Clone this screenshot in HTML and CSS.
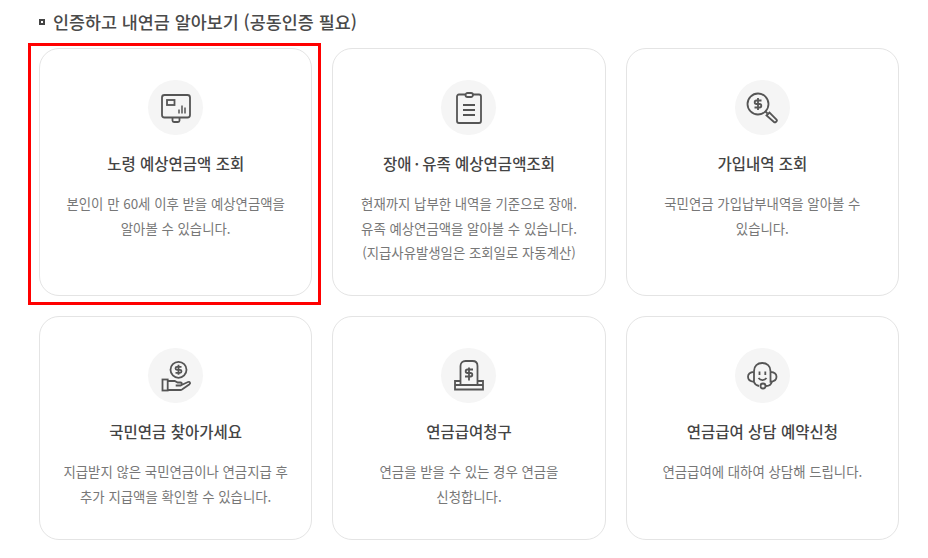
FILE: index.html
```html
<!DOCTYPE html>
<html lang="ko">
<head>
    <title>내연금 알아보기</title>
    <link rel="stylesheet" href="styles.css">
</head>
<body>
    <div class="pension-section">
        <h3 class="section-title"><span class="bullet"></span>인증하고 내연금 알아보기 (공동인증 필요)</h3>

        <div class="card-grid">
            <div class="card card-tall card-selected">
                <div class="icon-circle">
                    <svg viewBox="0 0 32 32" class="icon">
                        <rect x="2" y="3" width="28" height="22.500" rx="2.500"/>
                        <rect x="7" y="8" width="7.500" height="5"/>
                        <path d="M12.500 25.500v3c0 1 .5 1.500 1.500 1.500h4c1 0 1.500-.5 1.500-1.500v-3"/>
                        <path class="thin" d="M19 21.500v-4M22 21.500v-8M25 21.500v-6"/>
                    </svg>
                </div>
                <h4>노령 예상연금액 조회</h4>
                <p>본인이 만 60세 이후 받을 예상연금액을<br>알아볼 수 있습니다.</p>
            </div>

            <div class="card card-tall">
                <div class="icon-circle">
                    <svg viewBox="0 0 32 32" class="icon">
                        <path d="M12.500 2.500H6C4.800 2.500 4 3.300 4 4.500v24.500c0 1.200.8 2 2 2h20c1.200 0 2-.8 2-2V4.500c0-1.200-.8-2-2-2H20"/>
                        <rect x="12.500" y="1" width="7.500" height="4" rx="2"/>
                        <path d="M10 13h12M10 18h12M10 23h12"/>
                    </svg>
                </div>
                <h4>장애<span class="mid-dot">·</span>유족 예상연금액조회</h4>
                <p>현재까지 납부한 내역을 기준으로 장애.<br>유족 예상연금액을 알아볼 수 있습니다.<br>(지급사유발생일은 조회일로 자동계산)</p>
            </div>

            <div class="card card-tall">
                <div class="icon-circle">
                    <svg viewBox="0 0 32 32" class="icon">
                        <circle cx="12" cy="12" r="10.500"/>
                        <path d="M19.500 19.500l2 2"/>
                        <path d="M20.500 23.500l3-3 7 7c.6.7.6 1.200 0 1.800l-.7.700c-.6.600-1.200.600-1.800 0z"/>
                        <path d="M15.500 8.500h-5c-1.200 0-1.800.8-1.800 1.800s.6 1.700 1.800 1.700h3c1.200 0 1.800.8 1.800 1.800s-.6 1.700-1.800 1.700h-5M12 6v12"/>
                    </svg>
                </div>
                <h4>가입내역 조회</h4>
                <p>국민연금 가입납부내역을 알아볼 수<br>있습니다.</p>
            </div>

            <div class="card">
                <div class="icon-circle">
                    <svg viewBox="0 0 32 32" class="icon">
                        <circle cx="18.500" cy="9.800" r="8"/>
                        <path d="M21.500 6.800h-4.500c-1 0-1.500.7-1.500 1.500s.5 1.500 1.500 1.500h3c1 0 1.500.7 1.500 1.500s-.5 1.500-1.500 1.500h-4.500M18.500 4.800v10"/>
                        <rect x="2.500" y="19.500" width="5.200" height="11"/>
                        <path d="M7.700 21h7l3 1.500h3c1.500 0 1.500 3 0 3h-5M20.500 25.500l7.500-3.500c1.800-.7 2.800 1 1.500 2.200L22 29.500c-.5.300-1 .5-1.500.5H7.700"/>
                    </svg>
                </div>
                <h4>국민연금 찾아가세요</h4>
                <p>지급받지 않은 국민연금이나 연금지급 후<br>추가 지급액을 확인할 수 있습니다.</p>
            </div>

            <div class="card">
                <div class="icon-circle">
                    <svg viewBox="0 0 32 32" class="icon">
                        <path d="M7.500 25V6c0-3 2-5 5-5h7c3 0 5 2 5 5v19"/>
                        <path d="M7.500 21H2v8.500h28V21h-5.500M2 25h28"/>
                        <path d="M20 9.500h-5.500c-1.200 0-1.800.7-1.800 1.800s.6 1.700 1.800 1.700h3c1.200 0 1.800.8 1.800 1.800s-.6 1.700-1.800 1.700H12M16 7.500v13"/>
                    </svg>
                </div>
                <h4>연금급여청구</h4>
                <p>연금을 받을 수 있는 경우 연금을<br>신청합니다.</p>
            </div>

            <div class="card">
                <div class="icon-circle">
                    <svg viewBox="0 0 32 32" class="icon">
                        <path d="M8 11c0-5 3.500-8 8.200-8s8.300 3 8.300 8"/>
                        <path d="M8 11.800c-3.500.3-6 2-6 5s2.500 4.700 6 5zM24.500 11.800c3.500.3 6 2 6 5s-2.500 4.700-6 5z"/>
                        <path d="M8 22c.7 2 2.300 3.500 5 4"/>
                        <path d="M13.500 11.500v3.500M19.300 11.500v3.500M12.500 18c2 2.800 6 2.800 8 0"/>
                        <path d="M19.500 26c3 .2 5.500-1 6.500-4.500"/>
                        <circle cx="17" cy="26" r="2.500"/>
                    </svg>
                </div>
                <h4>연금급여 상담 예약신청</h4>
                <p>연금급여에 대하여 상담해 드립니다.</p>
            </div>
        </div>
    </div>
</body>
</html>
```

FILE: styles.css
```css
* {
    margin: 0;
    padding: 0;
    box-sizing: border-box;
    font-family: 'Noto Sans CJK KR', 'Noto Sans', sans-serif;
}

body {
    background: white;
    padding: 10px 29px 0 39px;
}

.section-title {
    display: flex;
    align-items: center;
    color: #4a4a4a;
    font-size: 17.400px;
    font-weight: 500;
    line-height: 24px;
    margin-bottom: 14px;
}

.bullet {
    width: 6px;
    height: 6px;
    border: 2px solid #444;
    margin-right: 8px;
}

.card-grid {
    display: grid;
    grid-template-columns: repeat(3, 1fr);
    gap: 20px;
}

.card {
    position: relative;
    height: 224px;
    padding-top: 31px;
    background: white;
    border: 1px solid #e4e4e4;
    border-radius: 20px;
    text-align: center;
}

.card-tall {
    height: 248px;
}

/* red highlight box around the first card */
.card-selected::after {
    content: '';
    position: absolute;
    top: -6px;
    left: -12px;
    right: -10px;
    bottom: -10px;
    border: 3px solid #ff0000;
}

.icon-circle {
    width: 55px;
    height: 55px;
    margin: 0 auto 17px;
    background: #f5f5f5;
    border-radius: 50%;
    display: flex;
    justify-content: center;
    align-items: center;
}

.icon {
    width: 32px;
    height: 32px;
    fill: none;
    stroke: #555;
    stroke-width: 1.800;
}

.icon .thin {
    stroke-width: 1.500;
}

.card h4 {
    color: #444;
    font-size: 15.500px;
    font-weight: 500;
    line-height: 22px;
    margin-bottom: 17px;
}

.mid-dot {
    margin: 0 3px;
}

.card p {
    color: #777;
    font-size: 13.400px;
    line-height: 24.500px;
}
```
